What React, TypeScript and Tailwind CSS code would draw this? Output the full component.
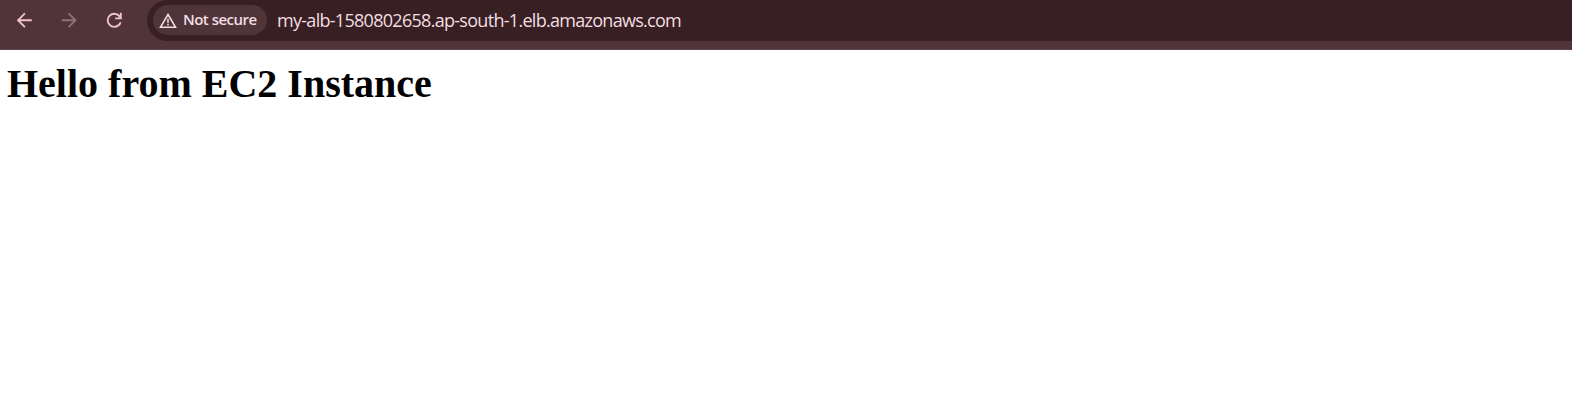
import { ReactNode } from "react";

function Icon({ children, className }: { children: ReactNode; className: string }) {
  return (
    <svg viewBox="0 0 24 24" fill="currentColor" className={className}>
      {children}
    </svg>
  );
}

export default function App() {
  return (
    <div className="h-[407px] w-full overflow-hidden bg-white">
      <header className="flex h-[50px] items-start border-b border-[#5b464a] bg-[#513439]">
        <nav className="flex w-[147px] shrink-0 items-center gap-[22.5px] pt-[8.5px] pl-[13.4px]">
          <Icon className="size-[22.5px] text-[#f0c3cb]"><path d="m7.825 13 5.6 5.6L12 20l-8-8 8-8 1.425 1.4-5.6 5.6H20v2z" /></Icon>
          <Icon className="size-[22.5px] text-[#8d7177]"><path d="M16.175 13H4v-2h12.175l-5.6-5.6L12 4l8 8-8 8-1.425-1.4z" /></Icon>
          <Icon className="size-[22.5px] text-[#f0c3cb]"><path d="M12 20q-3.35 0-5.675-2.325T4 12t2.325-5.675T12 4q1.725 0 3.3.713T18 6.75V4h2v7h-7V9h4.2q-.8-1.4-2.188-2.2T12 6Q9.5 6 7.75 7.75T6 12t1.75 4.25T12 18q1.925 0 3.475-1.1T17.65 14h2.1q-.7 2.65-2.85 4.325T12 20" /></Icon>
        </nav>
        <div className="flex h-[41px] flex-1 items-center rounded-l-[21px] bg-[#381f23] pl-[6px]">
          <div className="mb-px flex h-[30px] w-[114px] items-center rounded-full bg-[#4f343a] pl-[6px] text-[#f2dee1]">
            <svg viewBox="0 0 18 15" fill="none" stroke="currentColor" strokeWidth="1.6" className="h-[15px] w-[18px] shrink-0">
              <path d="M9 1.5 16.5 14.2h-15z" />
              <path d="M9 5.8v4M9 10.8v1.6" />
            </svg>
            <span className="ml-[6px] pb-[2px] font-['Open_Sans',sans-serif] text-[15px] font-semibold tracking-[-0.52px] whitespace-nowrap">Not secure</span>
          </div>
          <span className="ml-[10px] font-['Open_Sans',sans-serif] text-[18px] tracking-[-0.71px] text-[#f2dee1]">my-alb-1580802658.ap-south-1.elb.amazonaws.com</span>
        </div>
      </header>
      <main className="pt-[11px] pl-[7px]">
        <h1 className="font-['Liberation_Serif',serif] text-[40px] leading-[46px] font-bold text-black">Hello from EC2 Instance</h1>
      </main>
    </div>
  );
}
